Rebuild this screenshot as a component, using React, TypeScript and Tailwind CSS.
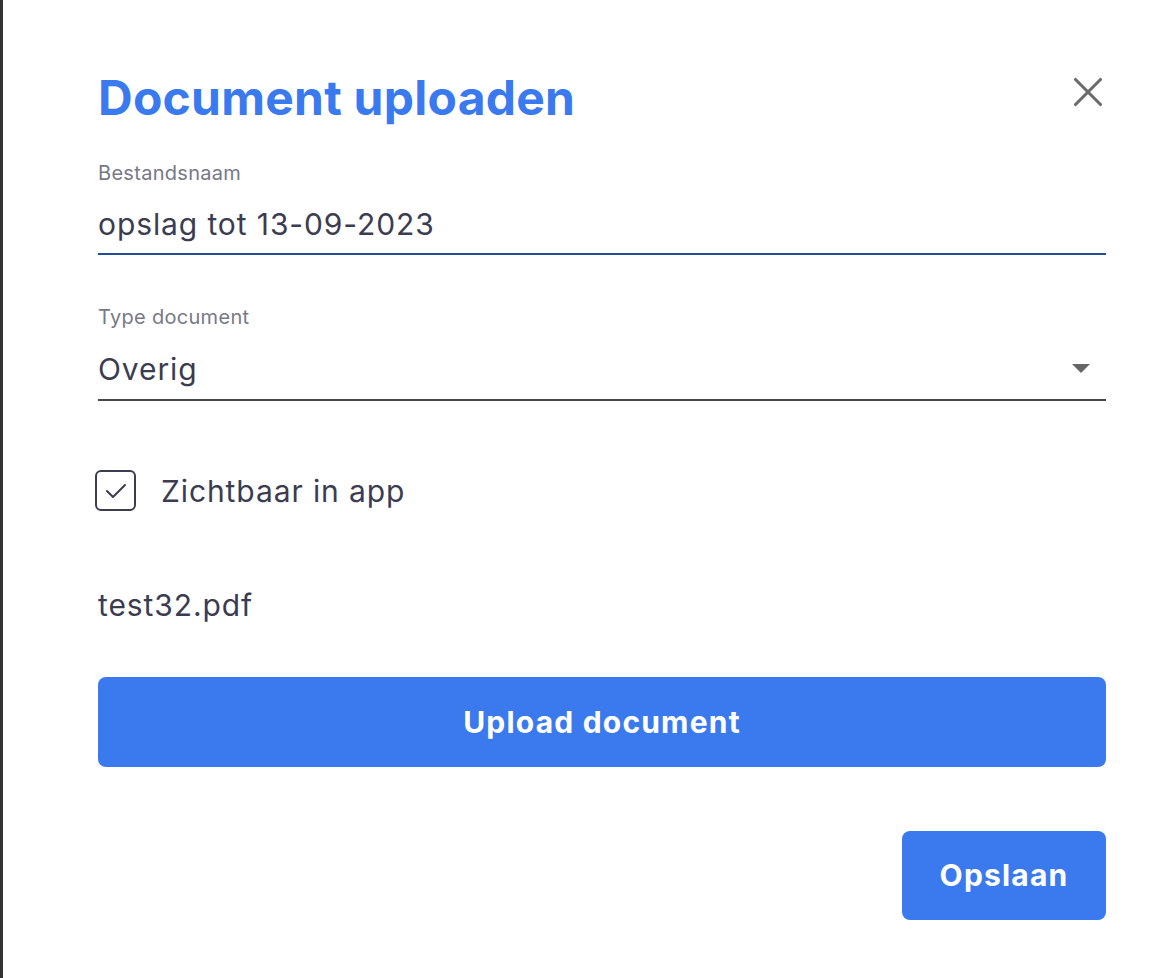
import { X } from 'lucide-react';

export default function App() {
    return (
        <div className="min-h-screen bg-white border-l-[3px] border-[#333333] font-['Inter',sans-serif] text-[#3c3c50]">
            <div className="pl-[95px] pr-[68px] pt-[72px] pb-[58px]">
                {/* Header */}
                <div className="flex items-start justify-between">
                    <h1 className="text-[48px] font-bold leading-[52px] tracking-[0.005em] text-[#3b7aee]">Document uploaden</h1>
                    <button className="mr-[-7px] mt-[-5px] text-[#6b6b6b]">
                        <X className="h-[50px] w-[50px]" strokeWidth={1.5} />
                    </button>
                </div>

                {/* Bestandsnaam */}
                <div className="mt-[37px]">
                    <div className="text-[20px] leading-[24px] tracking-[0.015em] text-[#787887]">Bestandsnaam</div>
                    <div className="mt-[21px] border-b-2 border-[#1f4f8f] pb-[11px] text-[30px] leading-[36px] tracking-[0.03em]">
                        opslag tot 13-09-2023
                    </div>
                </div>

                {/* Type document */}
                <div className="mt-[50px]">
                    <div className="text-[20px] leading-[24px] tracking-[0.015em] text-[#787887]">Type document</div>
                    <div className="mt-[22px] flex items-center justify-between border-b-2 border-[#45454f] pb-[12px]">
                        <span className="text-[30px] leading-[36px] tracking-[0.03em]">Overig</span>
                        <svg width="18" height="10" viewBox="0 0 18 10" className="mr-[16px]">
                            <path d="M0 0 L18 0 L9 9 Z" fill="#666666" />
                        </svg>
                    </div>
                </div>

                {/* Zichtbaar in app */}
                <label className="mt-[69px] flex items-center gap-[25px]">
                    <span className="ml-[-3px] flex h-[41px] w-[41px] items-center justify-center rounded-[6px] border-2 border-[#3c3c50]">
                        <svg width="22" height="16" viewBox="0 0 22 16" fill="none">
                            <path d="M2 8 L8 14 L20 2" stroke="#3c3c50" strokeWidth="2" strokeLinecap="round" strokeLinejoin="round" />
                        </svg>
                    </span>
                    <span className="text-[30px] leading-[36px] tracking-[0.03em]">Zichtbaar in app</span>
                </label>

                <div className="mt-[76px] text-[30px] leading-[36px] tracking-[0.03em]">test32.pdf</div>

                <button className="mt-[54px] flex h-[90px] w-full items-center justify-center rounded-[8px] bg-[#3b7aee] text-[30px] font-bold tracking-[0.04em] text-white">
                    Upload document
                </button>

                <div className="mt-[64px] flex justify-end">
                    <button className="flex h-[89px] w-[204px] items-center justify-center rounded-[8px] bg-[#3b7aee] text-[30px] font-bold tracking-[0.04em] text-white">
                        Opslaan
                    </button>
                </div>
            </div>
        </div>
    );
}
